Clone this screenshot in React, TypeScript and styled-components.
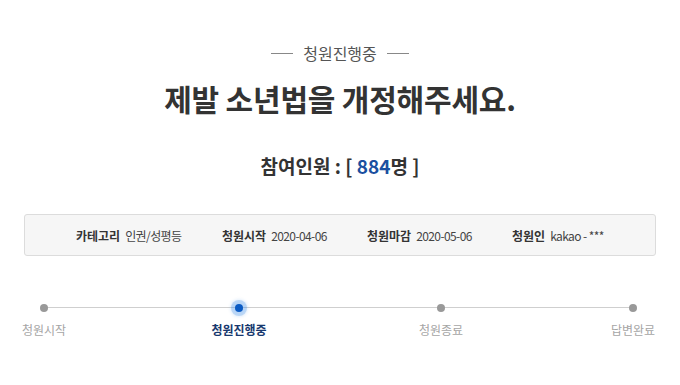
import React from "react";
import styled, { createGlobalStyle } from "styled-components";

const Global = createGlobalStyle`
  html, body { margin: 0; padding: 0; background: #fff; }
  body { font-family: "Noto Sans CJK KR", "Noto Sans", sans-serif; color: #333; }
`;

const Page = styled.div`
  width: 680px;
  height: 385px;
  overflow: hidden;
  display: flex;
  flex-direction: column;
  align-items: center;
`;

const Status = styled.div`
  margin-top: 42px;
  display: flex;
  align-items: center;
  gap: 10px;
  font-size: 16px;
  line-height: 22px;
  color: #555;
  &::before, &::after {
    content: "";
    width: 22px;
    height: 1px;
    background: #888;
  }
`;

const Title = styled.h1`
  margin: 14px 0 0;
  font-size: 30px;
  line-height: 40px;
  font-weight: 700;
  color: #333;
  letter-spacing: -0.2px;
`;

const Count = styled.div`
  margin-top: 35px;
  font-size: 19px;
  line-height: 26px;
  font-weight: 700;
  color: #333;
`;

const Num = styled.span`
  color: #1a4fa0;
`;

const InfoBox = styled.div`
  margin-top: 35px;
  align-self: stretch;
  margin-left: 24px;
  margin-right: 24px;
  height: 40px;
  box-sizing: content-box;
  border: 1px solid #dcdcdc;
  border-radius: 3px;
  background: #f6f6f6;
  display: flex;
  align-items: center;
  padding-left: 51px;
  font-size: 12px;
`;

const Info = styled.div<{ $w: number }>`
  width: ${(p) => p.$w}px;
  display: flex;
  align-items: center;
  gap: 5px;
  white-space: nowrap;
`;

const Label = styled.span`
  font-weight: 700;
  color: #333;
`;

const Value = styled.span`
  color: #444;
  letter-spacing: -0.6px;
`;

const Progress = styled.div`
  position: relative;
  align-self: stretch;
  margin: 48px 0 0;
  height: 34px;
  display: grid;
  grid-template-columns: 44px 195px 202px 192px 1fr;
  &::before {
    content: "";
    position: absolute;
    left: 44px;
    width: 589px;
    top: 3px;
    height: 1px;
    background: #cfcfcf;
  }
`;

const Step = styled.div`
  position: relative;
  grid-row: 1;
  width: 0;
  justify-self: end;
  display: flex;
  flex-direction: column;
  align-items: center;
`;

const Dot = styled.span<{ $active?: boolean }>`
  width: 8px;
  height: 8px;
  border-radius: 50%;
  background: ${(p) => (p.$active ? "#0b5bc4" : "#999")};
  box-shadow: ${(p) => (p.$active ? "0 0 0 4px rgba(60,140,230,0.25), 0 0 3px 5px rgba(60,140,230,0.15)" : "none")};
  flex: none;
`;

const StepLabel = styled.span<{ $active?: boolean }>`
  margin-top: 10px;
  font-size: 12px;
  line-height: 16px;
  white-space: nowrap;
  color: ${(p) => (p.$active ? "#17386e" : "#a5a5a5")};
  font-weight: ${(p) => (p.$active ? 700 : 400)};
`;

const steps = [
  { label: "청원시작", active: false },
  { label: "청원진행중", active: true },
  { label: "청원종료", active: false },
  { label: "답변완료", active: false },
];

export default function App() {
  return (
    <Page>
      <Global />
      <Status>청원진행중</Status>
      <Title>제발 소년법을 개정해주세요.</Title>
      <Count>
        참여인원 : [ <Num>884</Num>명 ]
      </Count>
      <InfoBox>
        <Info $w={146}>
          <Label>카테고리</Label>
          <Value>인권/성평등</Value>
        </Info>
        <Info $w={145}>
          <Label>청원시작</Label>
          <Value>2020-04-06</Value>
        </Info>
        <Info $w={145}>
          <Label>청원마감</Label>
          <Value>2020-05-06</Value>
        </Info>
        <Info $w={120}>
          <Label>청원인</Label>
          <Value>kakao - ***</Value>
        </Info>
      </InfoBox>
      <Progress>
        {steps.map((s) => (
          <Step key={s.label}>
            <Dot $active={s.active} />
            <StepLabel $active={s.active}>{s.label}</StepLabel>
          </Step>
        ))}
      </Progress>
    </Page>
  );
}
